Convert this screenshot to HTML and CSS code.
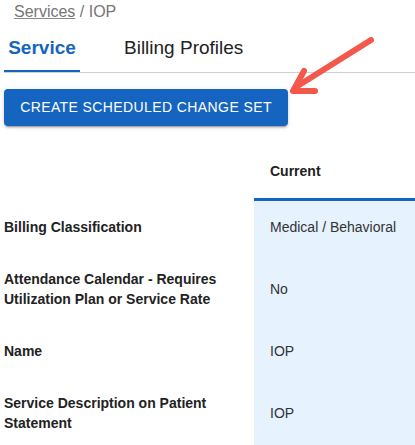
FILE: index.html
```html
<!DOCTYPE html>
<html>
<head>
<meta charset="utf-8">
<link rel="stylesheet" href="styles.css">
</head>
<body>
<div class="page">
  <div class="breadcrumb"><a class="crumb-link">Services</a> / IOP</div>
  <div class="tabs">
    <div class="tab active">Service</div>
    <div class="tab">Billing Profiles</div>
  </div>
  <div class="actions">
    <button class="btn">Create Scheduled Change Set</button>
  </div>
  <div class="table">
    <div class="th"></div>
    <div class="th th-current">Current</div>

    <div class="label">Billing Classification</div>
    <div class="value">Medical / Behavioral</div>

    <div class="label">Attendance Calendar - Requires Utilization Plan or Service Rate</div>
    <div class="value">No</div>

    <div class="label">Name</div>
    <div class="value">IOP</div>

    <div class="label">Service Description on Patient Statement</div>
    <div class="value">IOP</div>
  </div>
  <svg class="arrow" width="415" height="120" viewBox="0 0 415 120">
    <line x1="371" y1="40" x2="296" y2="87" />
    <polyline points="304,71 293,91 315,91" />
  </svg>
</div>
</body>
</html>
```
FILE: styles.css
```css
* { box-sizing: border-box; }
html, body { margin: 0; padding: 0; background: #fff; overflow: hidden; }
body { font-family: "Liberation Sans", Arial, sans-serif; color: #222; }
.page { position: relative; padding-left: 4px; width: 415px; }
.breadcrumb {
  font-size: 16px;
  line-height: 24px;
  color: #757575;
  padding-left: 10px;
}
.crumb-link { color: #757575; text-decoration: underline; text-decoration-color: #8a8a8a; }
.tabs {
  display: flex;
  height: 49px;
  border-bottom: 1px solid #d0d0d0;
}
.tab {
  font-size: 19px;
  line-height: 48px;
  padding: 0 4px;
  color: #222;
  height: 48px;
}
.tab + .tab { margin-left: 40px; }
.tab.active {
  color: #1565c0;
  font-weight: bold;
  border-bottom: 2px solid #1565c0;
  width: 76px;
  text-align: center;
  padding: 0;
}
.actions { padding-top: 16px; }
.btn {
  font-family: "Liberation Sans", Arial, sans-serif;
  font-size: 14px;
  letter-spacing: 0.4px;
  text-transform: uppercase;
  color: #fff;
  background: #1565c0;
  border: 0;
  border-radius: 4px;
  padding: 6px 16px;
  line-height: 25px;
  height: 37px;
  width: 284px;
  box-shadow: 0 3px 1px -2px rgba(0,0,0,0.2), 0 2px 2px 0 rgba(0,0,0,0.14), 0 1px 5px 0 rgba(0,0,0,0.12);
}
.table {
  display: grid;
  grid-template-columns: 250px 1fr;
  margin-top: 19px;
  font-size: 14px;
  line-height: 20px;
}
.th { padding: 16px 16px 17px; font-weight: bold; color: #222; }
.th-current { border-bottom: 3px solid #1565c0; }
.label {
  font-weight: bold;
  color: #222;
  padding: 16px 16px 16px 0;
}
.value {
  background: #e6f2fd;
  color: #333;
  padding: 16px;
  display: flex;
  align-items: center;
}
.arrow {
  position: absolute;
  left: 0;
  top: 0;
  fill: none;
  stroke: #f4574b;
  stroke-width: 6;
  stroke-linecap: round;
  stroke-linejoin: round;
}
```
